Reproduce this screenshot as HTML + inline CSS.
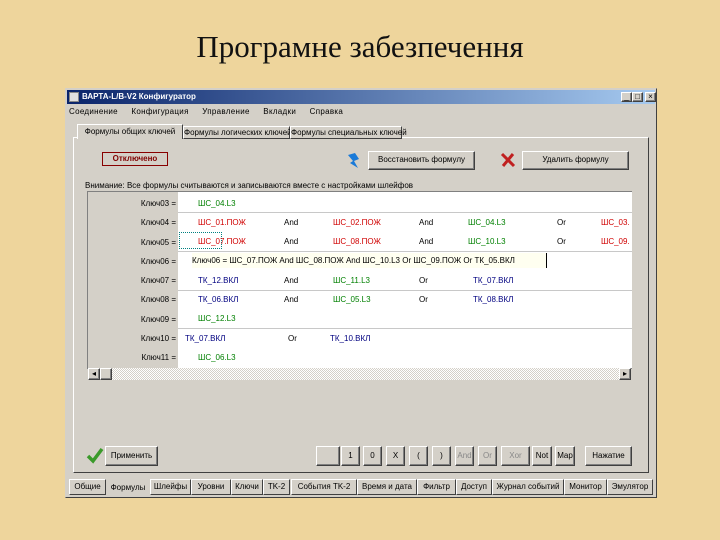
<!DOCTYPE html>
<html><head><meta charset="utf-8"><style>
*{margin:0;padding:0;box-sizing:border-box}
body{width:720px;height:540px;background:#eed59c;position:relative;overflow:hidden;font-family:"Liberation Sans",sans-serif}
.a{position:absolute}
.t{font-size:8px;white-space:nowrap;color:#000}
.btn{position:absolute;background:#d4d0c8;border:1px solid;border-color:#fff #404040 #404040 #fff;box-shadow:inset -1px -1px #808080;font-size:8px;text-align:center;line-height:16px;white-space:nowrap}
.r{color:#d00000}.g{color:#008000}.b{color:#000080}
.row{position:absolute;left:178px;width:454px;height:1px;background:#c8c8c8}
.tab{position:absolute;top:479px;height:16px;background:#d4d0c8;border:1px solid;border-color:#fff #404040 #404040 #fff;font-size:8px;line-height:14px;text-align:center;white-space:nowrap}
</style></head><body>
<div class="a" style="left:0;top:29px;width:720px;text-align:center;font-family:'Liberation Serif',serif;font-size:31px;color:#111">Програмне забезпечення</div>
<div class="a" style="left:65px;top:88px;width:592px;height:410px;background:#d4d0c8;border:1px solid;border-color:#d4d0c8 #404040 #404040 #d4d0c8"></div>
<div class="a" style="left:67px;top:90px;width:588px;height:14px;background:linear-gradient(90deg,#0a246a,#a6caf0)"></div>
<div class="a" style="left:69px;top:92px;width:10px;height:10px;background:#e0e0e0;border:1px solid #888"></div>
<div class="a t" style="left:82px;top:92px;color:#fff;font-weight:bold">ВАРТА-L/B-V2 Конфигуратор</div>
<div class="btn" style="left:621px;top:92px;width:11px;height:10px;line-height:8px">_</div>
<div class="btn" style="left:632px;top:92px;width:11px;height:10px;line-height:8px">□</div>
<div class="btn" style="left:645px;top:92px;width:11px;height:10px;line-height:8px">×</div>
<div class="a t" style="left:69px;top:107px;word-spacing:2px;letter-spacing:0.3px">Соединение &nbsp; Конфигурация &nbsp; Управление &nbsp; Вкладки &nbsp; Справка</div>
<div class="a" style="left:73px;top:137px;width:576px;height:336px;border:1px solid;border-color:#fff #404040 #404040 #fff"></div>
<div class="tab" style="left:77px;top:124px;width:106px;height:15px;border-bottom:none">Формулы общих ключей</div>
<div class="tab" style="left:183px;top:126px;width:107px;height:13px;line-height:11px">Формулы логических ключей</div>
<div class="tab" style="left:290px;top:126px;width:112px;height:13px;line-height:11px">Формулы специальных ключей</div>
<div class="btn" style="left:102px;top:152px;width:66px;height:14px;line-height:12px;color:#800000;font-weight:bold;border:1px solid #800;box-shadow:none">Отключено</div>
<svg class="a" style="left:345px;top:152px" width="16" height="18"><path d="M3 3 L10 1 L14 7 L9 9 L13 16 L5 11 L8 9 Z" fill="#1a7ad8"/></svg>
<div class="btn" style="left:368px;top:151px;width:107px;height:19px">Восстановить формулу</div>
<svg class="a" style="left:500px;top:152px" width="16" height="16"><path d="M2 2 L14 14 M13 2 L3 14" stroke="#c02020" stroke-width="3"/></svg>
<div class="btn" style="left:522px;top:151px;width:107px;height:19px">Удалить формулу</div>
<div class="a t" style="left:85px;top:181px">Внимание: Все формулы считываются и записываются вместе с настройками шлейфов</div>
<div class="a" style="left:87px;top:191px;width:545px;height:178px;background:#d4d0c8;border:1px solid #808080"></div>
<div class="a" style="left:178px;top:192px;width:454px;height:176px;background:#fff"></div>
<div class="row" style="top:212px"></div><div class="row" style="top:251px"></div><div class="row" style="top:290px"></div><div class="row" style="top:328px"></div>
<div class="a t" style="left:128px;top:194px;line-height:19.3px;text-align:right;width:48px">Ключ03 =<br>Ключ04 =<br>Ключ05 =<br>Ключ06 =<br>Ключ07 =<br>Ключ08 =<br>Ключ09 =<br>Ключ10 =<br>Ключ11 =</div>
<div class="a t g" style="left:198px;top:199px">ШС_04.L3</div>
<div class="a t r" style="left:198px;top:218px">ШС_01.ПОЖ</div><div class="a t" style="left:284px;top:218px">And</div><div class="a t r" style="left:333px;top:218px">ШС_02.ПОЖ</div><div class="a t" style="left:419px;top:218px">And</div><div class="a t g" style="left:468px;top:218px">ШС_04.L3</div><div class="a t" style="left:557px;top:218px">Or</div><div class="a t r" style="left:601px;top:218px">ШС_03.</div>
<div class="a" style="left:179px;top:232px;width:43px;height:17px;border:1px dotted #008080"></div>
<div class="a t r" style="left:198px;top:237px">ШС_07.ПОЖ</div><div class="a t" style="left:284px;top:237px">And</div><div class="a t r" style="left:333px;top:237px">ШС_08.ПОЖ</div><div class="a t" style="left:419px;top:237px">And</div><div class="a t g" style="left:468px;top:237px">ШС_10.L3</div><div class="a t" style="left:557px;top:237px">Or</div><div class="a t r" style="left:601px;top:237px">ШС_09.</div>
<div class="a t" style="left:192px;top:253px;width:355px;height:15px;border-right:1px solid #000;background:#fffff0;line-height:15px">Ключ06 = ШС_07.ПОЖ And ШС_08.ПОЖ And ШС_10.L3 Or ШС_09.ПОЖ Or ТК_05.ВКЛ</div>
<div class="a t b" style="left:198px;top:276px">ТК_12.ВКЛ</div><div class="a t" style="left:284px;top:276px">And</div><div class="a t g" style="left:333px;top:276px">ШС_11.L3</div><div class="a t" style="left:419px;top:276px">Or</div><div class="a t b" style="left:473px;top:276px">ТК_07.ВКЛ</div>
<div class="a t b" style="left:198px;top:295px">ТК_06.ВКЛ</div><div class="a t" style="left:284px;top:295px">And</div><div class="a t g" style="left:333px;top:295px">ШС_05.L3</div><div class="a t" style="left:419px;top:295px">Or</div><div class="a t b" style="left:473px;top:295px">ТК_08.ВКЛ</div>
<div class="a t g" style="left:198px;top:314px">ШС_12.L3</div>
<div class="a t b" style="left:185px;top:334px">ТК_07.ВКЛ</div><div class="a t" style="left:288px;top:334px">Or</div><div class="a t b" style="left:330px;top:334px">ТК_10.ВКЛ</div>
<div class="a t g" style="left:198px;top:353px">ШС_06.L3</div>
<div class="a" style="left:88px;top:368px;width:543px;height:12px;background:repeating-conic-gradient(#fff 0 25%,#d4d0c8 0 50%) 0 0/2px 2px"></div>
<div class="btn" style="left:88px;top:368px;width:12px;height:12px;line-height:10px">◂</div>
<div class="btn" style="left:100px;top:368px;width:12px;height:12px"></div>
<div class="btn" style="left:619px;top:368px;width:12px;height:12px;line-height:10px">▸</div>
<svg class="a" style="left:86px;top:446px" width="18" height="18"><path d="M2 10 L7 15 L16 3" stroke="#3a9a2a" stroke-width="3.5" fill="none"/></svg>
<div class="btn" style="left:105px;top:446px;width:53px;height:20px;line-height:18px">Применить</div>
<div class="btn" style="left:316px;top:446px;width:24px;height:20px;line-height:18px"></div>
<div class="btn" style="left:341px;top:446px;width:19px;height:20px;line-height:18px">1</div>
<div class="btn" style="left:363px;top:446px;width:19px;height:20px;line-height:18px">0</div>
<div class="btn" style="left:386px;top:446px;width:19px;height:20px;line-height:18px">X</div>
<div class="btn" style="left:409px;top:446px;width:19px;height:20px;line-height:18px">(</div>
<div class="btn" style="left:432px;top:446px;width:19px;height:20px;line-height:18px">)</div>
<div class="btn" style="left:455px;top:446px;width:19px;height:20px;line-height:18px;color:#888">And</div>
<div class="btn" style="left:478px;top:446px;width:19px;height:20px;line-height:18px;color:#888">Or</div>
<div class="btn" style="left:501px;top:446px;width:29px;height:20px;line-height:18px;color:#888">Xor</div>
<div class="btn" style="left:532px;top:446px;width:20px;height:20px;line-height:18px">Not</div>
<div class="btn" style="left:555px;top:446px;width:20px;height:20px;line-height:18px">Map</div>
<div class="btn" style="left:585px;top:446px;width:47px;height:20px;line-height:18px">Нажатие</div>
<div class="tab" style="left:69px;width:37px">Общие</div>
<div class="tab" style="left:106px;width:44px;border:none;top:481px">Формулы</div>
<div class="tab" style="left:150px;width:41px">Шлейфы</div>
<div class="tab" style="left:191px;width:40px">Уровни</div>
<div class="tab" style="left:231px;width:32px">Ключи</div>
<div class="tab" style="left:263px;width:27px">TK-2</div>
<div class="tab" style="left:291px;width:66px">События TK-2</div>
<div class="tab" style="left:357px;width:60px">Время и дата</div>
<div class="tab" style="left:417px;width:39px">Фильтр</div>
<div class="tab" style="left:456px;width:36px">Доступ</div>
<div class="tab" style="left:492px;width:72px">Журнал событий</div>
<div class="tab" style="left:564px;width:43px">Монитор</div>
<div class="tab" style="left:607px;width:46px">Эмулятор</div>
</body></html>
